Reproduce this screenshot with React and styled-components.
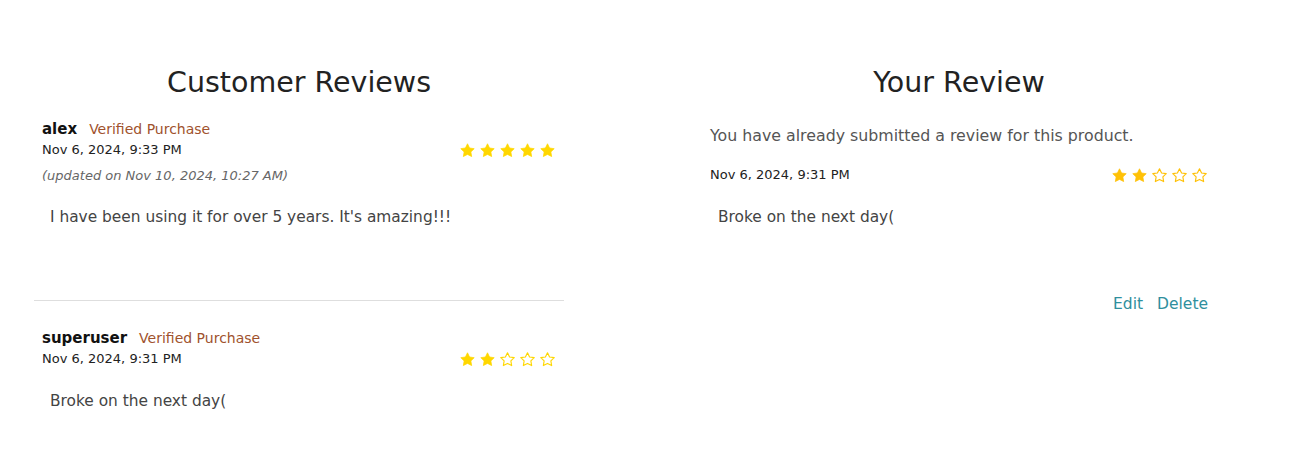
import React from "react";
import styled, { createGlobalStyle } from "styled-components";

const GlobalStyle = createGlobalStyle`
  body {
    margin: 0;
    background: #fff;
    font-family: "DejaVu Sans", "Open Sans", sans-serif;
    color: #222;
  }
`;

const Page = styled.div`
  display: grid;
  grid-template-columns: 530px 530px;
  column-gap: 130px;
  padding: 69px 0 0 34px;
  min-height: 404px;
`;

const Column = styled.section`
  display: flex;
  flex-direction: column;
`;

const Title = styled.h2`
  margin: 0;
  font-size: 28.5px;
  line-height: 28px;
  font-weight: 400;
  text-align: center;
  color: #222;
`;

const Card = styled.div`
  padding: 27px 8px 72px;
  border-bottom: 1px solid #dedede;

  &:first-of-type {
    padding-top: 22px;
  }

  &:last-child {
    border-bottom: none;
    padding-bottom: 40px;
  }
`;

const NameRow = styled.div`
  display: flex;
  align-items: baseline;
  gap: 12px;
  line-height: 20px;
`;

const Name = styled.span`
  font-size: 15px;
  font-weight: 700;
  color: #111;
`;

const Verified = styled.span`
  font-size: 14px;
  color: #a0522d;
`;

const DateRow = styled.div`
  display: flex;
  justify-content: space-between;
  align-items: center;
  margin-top: ${(p) => p.$top || 1}px;
`;

const DateText = styled.span`
  font-size: 13px;
  line-height: 20px;
  color: #222;
`;

const Updated = styled.div`
  margin-top: 6px;
  font-size: 13px;
  line-height: 20px;
  font-style: italic;
  color: #666;
`;

const Body = styled.p`
  margin: ${(p) => p.$top || 20}px 0 0;
  padding-left: 8px;
  font-size: 15.4px;
  line-height: 22px;
  color: #444;
`;

const Stars = styled.div`
  display: flex;
  gap: 3px;
`;

const Panel = styled.div`
  padding: 29px 16px 0;
`;

const Notice = styled.p`
  margin: 0;
  font-size: 15.8px;
  line-height: 20px;
  color: #555;
`;

const Actions = styled.div`
  display: flex;
  justify-content: flex-end;
  gap: 14px;
  margin-top: 66px;
`;

const ActionLink = styled.a`
  font-size: 15.5px;
  line-height: 20px;
  color: #2f8f9d;
  cursor: pointer;
`;

const STAR =
  "M12 2.5l2.94 5.96 6.56.95-4.75 4.63 1.12 6.54L12 17.5l-5.87 3.08 1.12-6.54L2.5 9.41l6.56-.95L12 2.5z";

const Star = ({ filled, color }) => (
  <svg width="17" height="17" viewBox="0 0 24 24">
    <path
      d={STAR}
      fill={filled ? color : "none"}
      stroke={color}
      strokeWidth={filled ? 1 : 1.6}
      strokeLinejoin="round"
    />
  </svg>
);

const Rating = ({ value, color = "#FFD700" }) => (
  <Stars>
    {[1, 2, 3, 4, 5].map((n) => (
      <Star key={n} filled={n <= value} color={color} />
    ))}
  </Stars>
);

const reviews = [
  {
    name: "alex",
    date: "Nov 6, 2024, 9:33 PM",
    updated: "(updated on Nov 10, 2024, 10:27 AM)",
    rating: 5,
    text: "I have been using it for over 5 years. It's amazing!!!",
  },
  {
    name: "superuser",
    date: "Nov 6, 2024, 9:31 PM",
    rating: 2,
    text: "Broke on the next day(",
  },
];

const App = () => {
  return (
    <>
      <GlobalStyle />
      <Page>
        <Column>
          <Title>Customer Reviews</Title>
          {reviews.map((r) => (
            <Card key={r.name}>
              <NameRow>
                <Name>{r.name}</Name>
                <Verified>Verified Purchase</Verified>
              </NameRow>
              <DateRow>
                <DateText>{r.date}</DateText>
                <Rating value={r.rating} />
              </DateRow>
              {r.updated && <Updated>{r.updated}</Updated>}
              <Body $top={r.updated ? 20 : 21}>{r.text}</Body>
            </Card>
          ))}
        </Column>
        <Column>
          <Title>Your Review</Title>
          <Panel>
            <Notice>You have already submitted a review for this product.</Notice>
            <DateRow $top={19}>
              <DateText>Nov 6, 2024, 9:31 PM</DateText>
              <Rating value={2} color="#FFC107" />
            </DateRow>
            <Body $top={21}>Broke on the next day(</Body>
            <Actions>
              <ActionLink>Edit</ActionLink>
              <ActionLink>Delete</ActionLink>
            </Actions>
          </Panel>
        </Column>
      </Page>
    </>
  );
};

export default App;
